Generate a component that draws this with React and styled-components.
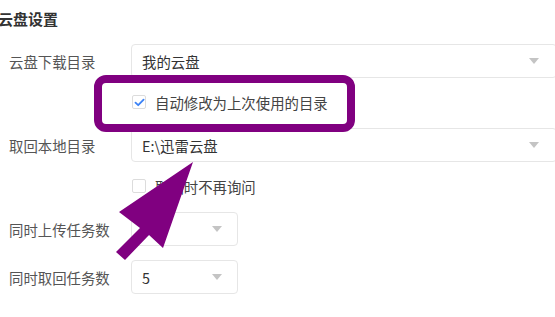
import React from "react";
import styled, { createGlobalStyle } from "styled-components";

const Global = createGlobalStyle`
  html, body { margin: 0; padding: 0; background: #fff; }
  body { overflow: hidden; font-family: "Noto Sans CJK SC", "Noto Sans", sans-serif; }
`;

const Page = styled.div`
  position: relative;
  width: 555px;
  height: 317px;
  overflow: hidden;
  display: flex;
  flex-direction: column;
  padding-top: 9px;
  box-sizing: border-box;
`;

const Title = styled.div`
  font-size: 15px;
  font-weight: 700;
  line-height: 20px;
  color: #333;
  margin-left: -2px;
  margin-bottom: 15px;
`;

const Row = styled.div`
  display: flex;
  align-items: center;
  height: 34px;
  margin-bottom: ${(p) => p.$mb || 0}px;
`;

const Label = styled.div`
  width: 131px;
  padding-left: 9px;
  box-sizing: border-box;
  font-size: 14.4px;
  color: #555;
  flex-shrink: 0;
`;

const Select = styled.div`
  display: flex;
  align-items: center;
  justify-content: space-between;
  height: 34px;
  width: ${(p) => (p.$small ? "107px" : "426px")};
  flex-shrink: 0;
  box-sizing: border-box;
  border: 1px solid #e6e6e6;
  border-radius: 4px;
  padding: 0 ${(p) => (p.$small ? 15 : 17)}px 0 10px;
  font-size: 14.4px;
  color: #333;
`;

const Caret = styled.span`
  width: 0;
  height: 0;
  border-left: 5px solid transparent;
  border-right: 5px solid transparent;
  border-top: 6px solid #c4c4c4;
`;

const CheckRow = styled.div`
  display: flex;
  align-items: center;
  height: 32px;
  padding-left: 132px;
  margin: 8px 0 10px;
  gap: 9px;
  font-size: 14.4px;
  color: #444;
`;

const Box = styled.span`
  width: 14px;
  height: 14px;
  box-sizing: border-box;
  border: 1px solid #dcdcdc;
  border-radius: 2px;
  background: #fff;
  display: flex;
  align-items: center;
  justify-content: center;
`;

const Highlight = styled.div`
  position: absolute;
  left: 94px;
  top: 75px;
  width: 261px;
  height: 57px;
  box-sizing: border-box;
  border: 8.5px solid #800080;
  border-radius: 12px;
  pointer-events: none;
`;

const ArrowSvg = styled.svg`
  position: absolute;
  left: 0;
  top: 0;
  pointer-events: none;
`;

const Check = () => (
  <svg width="11" height="9" viewBox="0 0 11 9">
    <path d="M1.5 4.6 L4.2 7.2 L9.6 1.6" fill="none" stroke="#3b82f6" strokeWidth="1.8" strokeLinecap="round" strokeLinejoin="round" />
  </svg>
);

export default function App() {
  return (
    <>
      <Global />
      <Page>
        <Title>云盘设置</Title>
        <Row>
          <Label>云盘下载目录</Label>
          <Select>
            <span>我的云盘</span>
            <Caret />
          </Select>
        </Row>
        <CheckRow>
          <Box><Check /></Box>
          <span>自动修改为上次使用的目录</span>
        </CheckRow>
        <Row>
          <Label>取回本地目录</Label>
          <Select>
            <span>E:\迅雷云盘</span>
            <Caret />
          </Select>
        </Row>
        <CheckRow>
          <Box />
          <span>取回时不再询问</span>
        </CheckRow>
        <Row $mb={14}>
          <Label>同时上传任务数</Label>
          <Select $small>
            <span>3</span>
            <Caret />
          </Select>
        </Row>
        <Row>
          <Label>同时取回任务数</Label>
          <Select $small>
            <span>5</span>
            <Caret />
          </Select>
        </Row>
        <Highlight />
        <ArrowSvg width="555" height="317" viewBox="0 0 555 317">
          <polygon points="193,162 119,212 140,228 116,252 125,260 149,235 163,248" fill="#800080" />
        </ArrowSvg>
      </Page>
    </>
  );
}
